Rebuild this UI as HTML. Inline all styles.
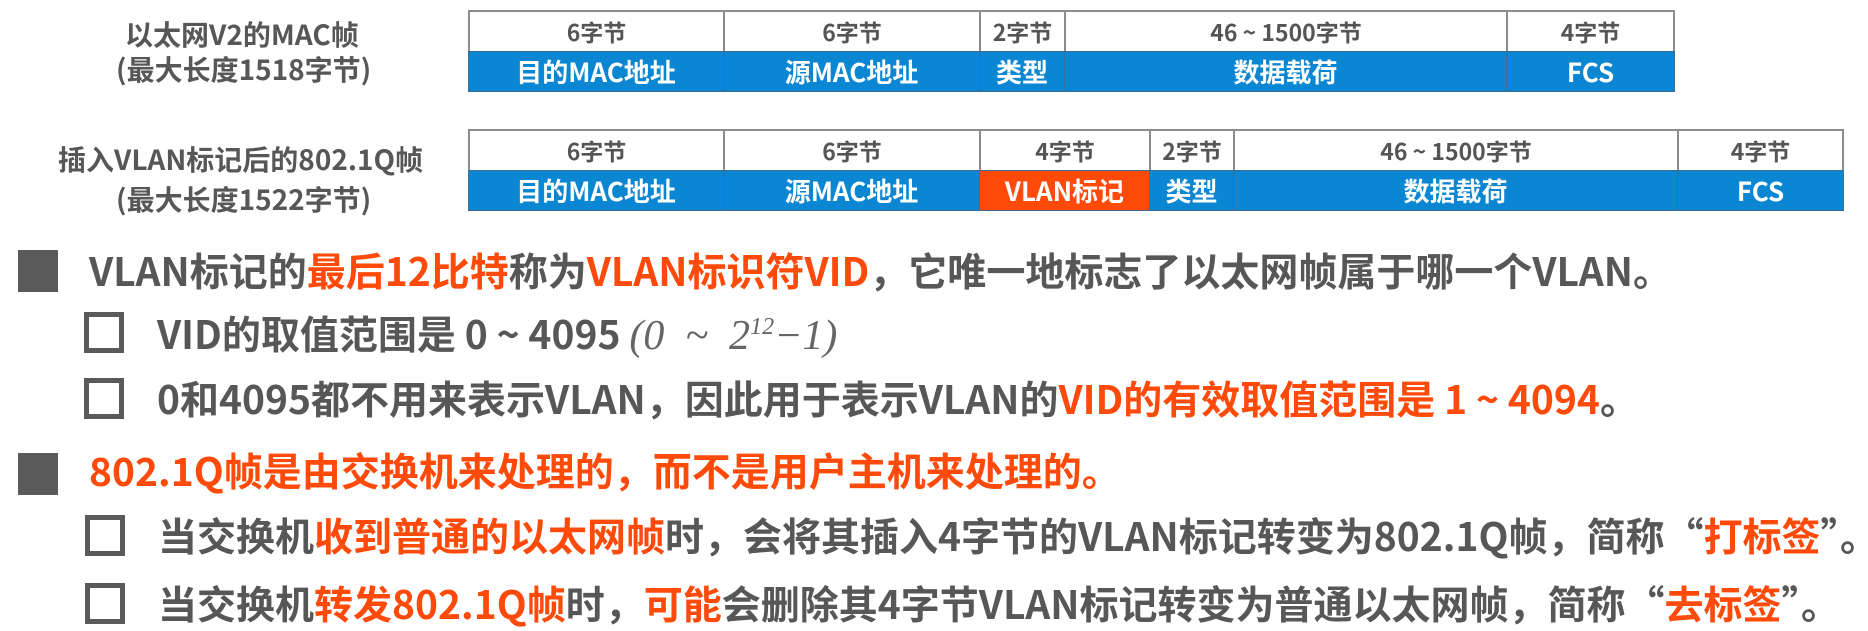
<!DOCTYPE html>
<html><head><meta charset="utf-8"><style>
body{margin:0;width:1868px;height:624px;background:#fff;position:relative;overflow:hidden;font-family:"Noto Sans CJK SC","Liberation Sans",sans-serif;font-weight:bold;color:#575757}
.a{position:absolute;white-space:nowrap;line-height:1}
.o{color:#ff4a0a}
.c{position:absolute;box-sizing:border-box;display:flex;align-items:center;justify-content:center;white-space:nowrap;font-size:23px;line-height:1}
.h{background:#fff;color:#555;border:2px solid #8c8c8c}
.b{background:#0a86d2;color:#fff;border:1px solid #3a6d94;font-size:26px}
.r{background:#ff4a0a}
.big{position:absolute;width:40px;height:42px;background:#5a5a5a}
.sm{position:absolute;box-sizing:border-box;width:40px;height:41px;border:5px solid #5a5a5a}
.l1{font-size:39px}.l2{font-size:39px}
.m{font-family:"Liberation Serif",serif;font-style:italic;font-weight:normal;color:#666}
</style></head><body>
<div class="a" style="left:125px;top:20px;font-size:28px">以太网V2的MAC帧</div>
<div class="a" style="left:116px;top:55px;font-size:28px">(最大长度1518字节)</div>
<div class="a" style="left:58px;top:145px;font-size:28px">插入VLAN标记后的802.1Q帧</div>
<div class="a" style="left:116px;top:185px;font-size:28px">(最大长度1522字节)</div>

<div class="c h" style="left:468px;top:10px;width:257px;height:43px">6字节</div>
<div class="c h" style="left:723px;top:10px;width:258px;height:43px">6字节</div>
<div class="c h" style="left:979px;top:10px;width:87px;height:43px">2字节</div>
<div class="c h" style="left:1064px;top:10px;width:444px;height:43px">46 ~ 1500字节</div>
<div class="c h" style="left:1506px;top:10px;width:169px;height:43px">4字节</div>
<div class="c b" style="left:468px;top:51px;width:256px;height:41px">目的MAC地址</div>
<div class="c b" style="left:723px;top:51px;width:257px;height:41px">源MAC地址</div>
<div class="c b" style="left:979px;top:51px;width:86px;height:41px">类型</div>
<div class="c b" style="left:1064px;top:51px;width:443px;height:41px">数据载荷</div>
<div class="c b" style="left:1506px;top:51px;width:169px;height:41px">FCS</div>

<div class="c h" style="left:468px;top:129px;width:257px;height:43px">6字节</div>
<div class="c h" style="left:723px;top:129px;width:258px;height:43px">6字节</div>
<div class="c h" style="left:979px;top:129px;width:172px;height:43px">4字节</div>
<div class="c h" style="left:1149px;top:129px;width:86px;height:43px">2字节</div>
<div class="c h" style="left:1233px;top:129px;width:446px;height:43px">46 ~ 1500字节</div>
<div class="c h" style="left:1677px;top:129px;width:167px;height:43px">4字节</div>
<div class="c b" style="left:468px;top:170px;width:256px;height:41px">目的MAC地址</div>
<div class="c b" style="left:723px;top:170px;width:257px;height:41px">源MAC地址</div>
<div class="c b r" style="left:979px;top:170px;width:171px;height:41px">VLAN标记</div>
<div class="c b" style="left:1149px;top:170px;width:85px;height:41px">类型</div>
<div class="c b" style="left:1233px;top:170px;width:445px;height:41px">数据载荷</div>
<div class="c b" style="left:1677px;top:170px;width:167px;height:41px">FCS</div>

<div class="big" style="left:18px;top:250px"></div>
<div class="a l1" style="left:89px;top:251px">VLAN标记的<span class="o">最后12比特</span>称为<span class="o">VLAN标识符VID</span>，它唯一地标志了以太网帧属于哪一个VLAN。</div>

<div class="sm" style="left:84px;top:312px"></div>
<div class="a l2" style="left:157px;top:314px">VID的取值范围是 0 ~ 4095 <span class="m" style="font-size:42px">(0&nbsp; ~&nbsp; 2<sup style="font-size:24px">12</sup>−1)</span></div>

<div class="sm" style="left:84px;top:378px"></div>
<div class="a l2" style="left:157px;top:379px">0和4095都不用来表示VLAN，因此用于表示VLAN的<span class="o">VID的有效取值范围是 1 ~ 4094</span>。</div>

<div class="big" style="left:18px;top:453px"></div>
<div class="a l1 o" style="left:89px;top:451px">802.1Q帧是由交换机来处理的，而不是用户主机来处理的。</div>

<div class="sm" style="left:85px;top:515px"></div>
<div class="a l2" style="left:158px;top:516px">当交换机<span class="o">收到普通的以太网帧</span>时，会将其插入4字节的VLAN标记转变为802.1Q帧，简称“<span class="o">打标签</span>”。</div>

<div class="sm" style="left:85px;top:583px"></div>
<div class="a l2" style="left:158px;top:584px">当交换机<span class="o">转发802.1Q帧</span>时，<span class="o">可能</span>会删除其4字节VLAN标记转变为普通以太网帧，简称“<span class="o">去标签</span>”。</div>
</body></html>
